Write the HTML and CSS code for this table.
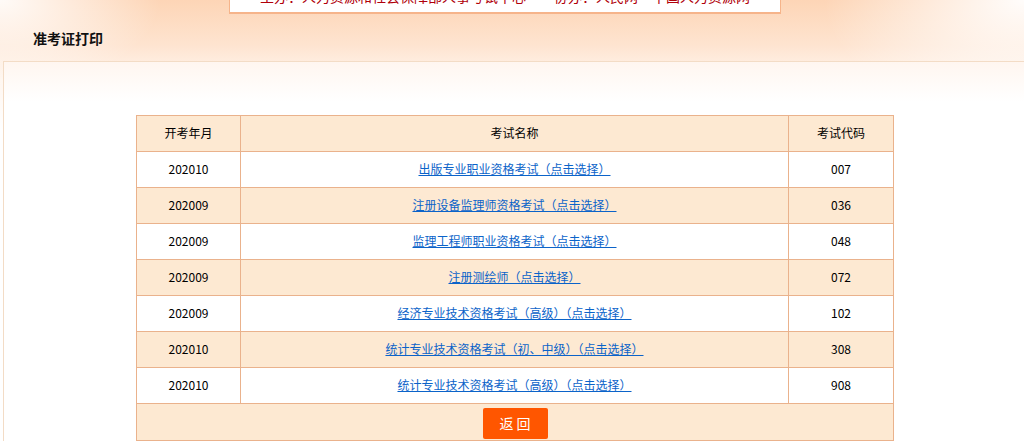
FILE: index.html
```html
<!DOCTYPE html>
<html lang="zh-CN">
<head>
<meta charset="utf-8">
<title>准考证打印</title>
<link rel="stylesheet" href="styles.css">
</head>
<body>
<div class="page">
  <div class="topbar">
    <div class="notice"><span>主办：人力资源和社会保障部人事考试中心　　协办：人民网·中国人力资源网</span></div>
  </div>
  <div class="heading">准考证打印</div>
  <div class="panel">
    <table class="exam">
      <colgroup><col class="c1"><col class="c2"><col class="c3"></colgroup>
      <thead>
        <tr><th>开考年月</th><th>考试名称</th><th>考试代码</th></tr>
      </thead>
      <tbody>
        <tr><td>202010</td><td><a href="#">出版专业职业资格考试（点击选择）</a></td><td>007</td></tr>
        <tr class="alt"><td>202009</td><td><a href="#">注册设备监理师资格考试（点击选择）</a></td><td>036</td></tr>
        <tr><td>202009</td><td><a href="#">监理工程师职业资格考试（点击选择）</a></td><td>048</td></tr>
        <tr class="alt"><td>202009</td><td><a href="#">注册测绘师（点击选择）</a></td><td>072</td></tr>
        <tr><td>202009</td><td><a href="#">经济专业技术资格考试（高级）（点击选择）</a></td><td>102</td></tr>
        <tr class="alt"><td>202010</td><td><a href="#">统计专业技术资格考试（初、中级）（点击选择）</a></td><td>308</td></tr>
        <tr><td>202010</td><td><a href="#">统计专业技术资格考试（高级）（点击选择）</a></td><td>908</td></tr>
        <tr class="alt foot"><td colspan="3"><button class="back">返回</button></td></tr>
      </tbody>
    </table>
  </div>
</div>
</body>
</html>
```

FILE: styles.css
```css
html, body {
  margin: 0;
  padding: 0;
}
body {
  font-family: "Noto Sans CJK SC", "Noto Sans", sans-serif;
  font-size: 12px;
  color: #000;
  background: #fff;
}
.page {
  min-height: 442px;
  background:
    radial-gradient(ellipse 160px 90px at 0 0, rgba(255,255,255,0.9), rgba(255,255,255,0) 100%),
    radial-gradient(ellipse 200px 120px at 100% 0, rgba(255,255,255,0.95), rgba(255,255,255,0) 100%),
    linear-gradient(to bottom, #fdd5b6 0px, #fee4d0 45px, #fff6ef 80px, #ffffff 130px);
  background-repeat: no-repeat;
  overflow: hidden;
}
.topbar {
  height: 14px;
}
.notice {
  margin-left: 229px;
  width: 550px;
  height: 12px;
  background: #fff;
  border: 1px solid #f6b48a;
  border-top: none;
  border-bottom: 2px solid #f6b48a;
  overflow: hidden;
  text-align: center;
}
.notice span {
  display: block;
  font-size: 14px;
  line-height: 14px;
  color: #b0000a;
  margin-top: -11px;
  white-space: nowrap;
}
.heading {
  height: 47px;
  line-height: 48px;
  padding-left: 33px;
  font-size: 14px;
  font-weight: bold;
  color: #111;
}
.panel {
  margin-left: 3px;
  border-top: 1px solid #f3dcc6;
  border-left: 1px solid #f3dcc6;
  padding-top: 53px;
  padding-left: 132px;
  background: linear-gradient(to bottom, #fff6f0 0px, #ffffff 40px);
}
.exam {
  border-collapse: collapse;
  width: 757px;
  table-layout: fixed;
  border: 1px solid #eab28c;
}
.exam .c1 { width: 104px; }
.exam .c2 { width: 548px; }
.exam .c3 { width: 105px; }
.exam th,
.exam td {
  border: 1px solid #eab28c;
  height: 33px;
  padding: 0 0 2px;
  text-align: center;
  font-weight: normal;
  font-size: 12px;
}
.exam thead tr,
.exam tr.alt {
  background: #fde9d2;
}
.exam a {
  color: #0b63c9;
  text-decoration: underline;
}
.exam tr.foot td {
  height: 36px;
  padding: 0;
}
.back {
  width: 65px;
  height: 31px;
  border: none;
  border-radius: 2px;
  background: #ff5600;
  color: #fff;
  font-family: "Noto Sans CJK SC", sans-serif;
  font-size: 14px;
  letter-spacing: 3px;
  padding: 0 0 0 3px;
  margin-top: 2px;
  cursor: pointer;
}
```
